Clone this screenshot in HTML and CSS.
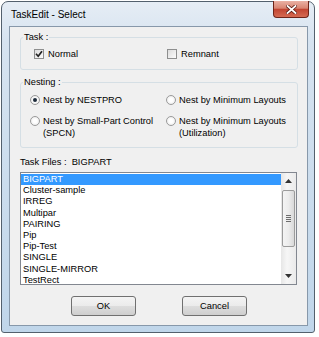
FILE: index.html
```html
<!DOCTYPE html>
<html lang="en">
<head>
    <meta charset="UTF-8">
    <title>TaskEdit - Select</title>
    <link rel="stylesheet" href="styles.css">
</head>
<body>
    <div class="window">
        <div class="titlebar">
            <span class="title">TaskEdit - Select</span>
            <div class="close">
                <svg width="11" height="9" viewBox="0 0 11 9">
                    <path d="M1.5 1 L9.5 8 M9.5 1 L1.5 8" stroke="#5a1a12" stroke-width="3.4" stroke-linecap="square"/>
                    <path d="M1.5 1 L9.5 8 M9.5 1 L1.5 8" stroke="#fff" stroke-width="1.8" stroke-linecap="square"/>
                </svg>
            </div>
        </div>
        <div class="client">
            <fieldset class="group task-group">
                <legend>Task :</legend>
                <div class="task-row">
                    <label class="check">
                        <span class="box">
                            <svg width="8" height="8" viewBox="0 0 8 8"><path d="M1 3.8 L3.2 6.2 L7 1.2" fill="none" stroke="#222" stroke-width="1.7"/></svg>
                        </span>
                        Normal
                    </label>
                    <label class="check">
                        <span class="box"></span>
                        Remnant
                    </label>
                </div>
            </fieldset>
            <fieldset class="group nest-group">
                <legend>Nesting :</legend>
                <div class="nest-grid">
                    <label class="radio"><span class="dot on"></span><span>Nest by NESTPRO</span></label>
                    <label class="radio"><span class="dot"></span><span>Nest by Minimum Layouts</span></label>
                    <label class="radio"><span class="dot"></span><span>Nest by Small-Part Control<br>(SPCN)</span></label>
                    <label class="radio"><span class="dot"></span><span>Nest by Minimum Layouts<br>(Utilization)</span></label>
                </div>
            </fieldset>
            <div class="files-label">Task Files :&nbsp; BIGPART</div>
            <div class="listbox">
                <ul class="items">
                    <li class="selected">BIGPART</li>
                    <li>Cluster-sample</li>
                    <li>IRREG</li>
                    <li>Multipar</li>
                    <li>PAIRING</li>
                    <li>Pip</li>
                    <li>Pip-Test</li>
                    <li>SINGLE</li>
                    <li>SINGLE-MIRROR</li>
                    <li>TestRect</li>
                </ul>
                <div class="scrollbar">
                    <div class="arrow">
                        <svg width="7" height="4" viewBox="0 0 7 4"><path d="M0 4 L3.5 0 L7 4 Z" fill="#333"/></svg>
                    </div>
                    <div class="track">
                        <div class="thumb">
                            <div class="grip"></div>
                        </div>
                    </div>
                    <div class="arrow">
                        <svg width="7" height="4" viewBox="0 0 7 4"><path d="M0 0 L7 0 L3.5 4 Z" fill="#333"/></svg>
                    </div>
                </div>
            </div>
            <div class="buttons">
                <button class="btn">OK</button>
                <button class="btn">Cancel</button>
            </div>
        </div>
    </div>
</body>
</html>
```

FILE: styles.css
```css
body {
    margin: 0;
    background: #fff;
    font-family: "Liberation Sans", Arial, sans-serif;
    font-size: 9.3px;
    color: #000;
}
.window {
    margin: 1px 0 0 1px;
    width: 314px;
    height: 332px;
    box-sizing: border-box;
    border: 1px solid #53606d;
    border-radius: 7px 7px 3px 3px;
    background: linear-gradient(to bottom, #e6edf5 0, #d6e3f0 40px, #c0d6ea 100%);
    padding: 0 6px 6px 7px;
    display: flex;
    flex-direction: column;
}
.titlebar {
    height: 24px;
    display: flex;
    justify-content: space-between;
    align-items: flex-start;
}
.title {
    font-size: 10px;
    line-height: 12px;
    margin: 7px 0 0 2px;
    color: #000;
}
.close {
    width: 36px;
    height: 17px;
    margin: -1px -1px 0 0;
    box-sizing: border-box;
    border: 1px solid #6e2419;
    border-top: none;
    border-radius: 0 0 4px 4px;
    background: linear-gradient(to bottom, #eab1a4 0%, #d98572 45%, #c24532 52%, #d56a52 100%);
    display: flex;
    align-items: center;
    justify-content: center;
}
.client {
    flex: 1;
    background: #f0f0f0;
    border: 1px solid #8798aa;
    display: flex;
    flex-direction: column;
    padding: 4px 9px 0 10px;
}
.group {
    margin: 0;
    padding: 0;
    border: 1px solid #d5dfe5;
    border-radius: 3px;
    min-width: 0;
}
.group legend {
    padding: 0 1px;
    margin-left: 2px;
    line-height: 12px;
}
.task-row {
    height: 22px;
    padding: 0 0 4px 13px;
    display: grid;
    grid-template-columns: 133px 1fr;
    align-items: center;
}
.check {
    display: flex;
    align-items: center;
    gap: 4px;
}
.box {
    width: 10px;
    height: 10px;
    box-sizing: border-box;
    border: 1px solid #8e8f8f;
    background: linear-gradient(135deg, #dcdcdc, #fcfcfc);
    display: flex;
    align-items: center;
    justify-content: center;
}
.nest-group {
    margin-top: 6px;
}
.nest-grid {
    padding: 6px 0 8px 9px;
    display: grid;
    grid-template-columns: 136px 1fr;
    row-gap: 9px;
    line-height: 12px;
}
.radio {
    display: flex;
    align-items: flex-start;
    gap: 3px;
}
.dot {
    width: 10px;
    height: 10px;
    margin-top: 1px;
    box-sizing: border-box;
    border: 1px solid #9a9a9a;
    border-radius: 50%;
    background: radial-gradient(circle, #ffffff 30%, #e4e4e4 100%);
    flex-shrink: 0;
    display: flex;
    align-items: center;
    justify-content: center;
}
.dot.on::after {
    content: "";
    width: 4px;
    height: 4px;
    border-radius: 50%;
    background: #1d2b3a;
}
.files-label {
    margin: 8px 0 4px;
    line-height: 12px;
}
.listbox {
    width: 277px;
    height: 113px;
    box-sizing: border-box;
    border: 1px solid #828790;
    background: #fff;
    display: flex;
    overflow: hidden;
}
.items {
    list-style: none;
    margin: 0;
    padding: 1px 0 0;
    flex: 1;
}
.items li {
    height: 11.2px;
    line-height: 11.2px;
    padding-left: 2px;
    white-space: nowrap;
}
.items li.selected {
    background: #3399ff;
    color: #fff;
}
.scrollbar {
    width: 15px;
    display: flex;
    flex-direction: column;
    background: linear-gradient(to right, #e6e6e6, #f6f6f6 40%, #eaeaea);
}
.arrow {
    height: 16px;
    display: flex;
    align-items: center;
    justify-content: center;
}
.track {
    flex: 1;
    padding-top: 1px;
}
.thumb {
    height: 57px;
    margin: 0 1px;
    box-sizing: border-box;
    border: 1px solid #9b9b9b;
    border-radius: 2px;
    background: linear-gradient(to right, #f4f4f4, #ececec 50%, #d9d9d9);
    display: flex;
    align-items: center;
    justify-content: center;
}
.grip {
    width: 5px;
    height: 7px;
    background: repeating-linear-gradient(to bottom, #6d6d6d 0, #6d6d6d 1px, transparent 1px, transparent 2px);
}
.buttons {
    margin-top: 11px;
    display: flex;
    justify-content: center;
    gap: 46px;
}
.btn {
    width: 65px;
    height: 20px;
    padding: 0;
    border: 1px solid #707070;
    border-radius: 3px;
    background: linear-gradient(to bottom, #f4f4f4 0%, #ebebeb 50%, #dddddd 51%, #cfcfcf 100%);
    font-family: "Liberation Sans", Arial, sans-serif;
    font-size: 9.3px;
    color: #000;
}
```
